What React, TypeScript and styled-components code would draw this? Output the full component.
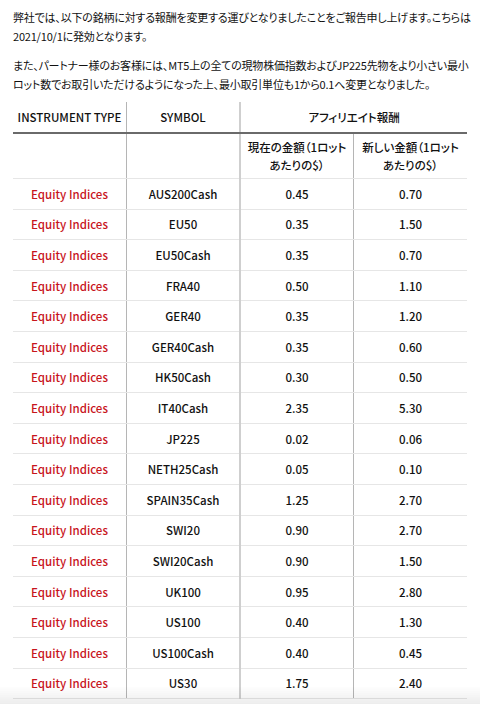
import React from "react";
import styled, { createGlobalStyle } from "styled-components";

const rows: [string, string, string][] = [
  ["AUS200Cash", "0.45", "0.70"],
  ["EU50", "0.35", "1.50"],
  ["EU50Cash", "0.35", "0.70"],
  ["FRA40", "0.50", "1.10"],
  ["GER40", "0.35", "1.20"],
  ["GER40Cash", "0.35", "0.60"],
  ["HK50Cash", "0.30", "0.50"],
  ["IT40Cash", "2.35", "5.30"],
  ["JP225", "0.02", "0.06"],
  ["NETH25Cash", "0.05", "0.10"],
  ["SPAIN35Cash", "1.25", "2.70"],
  ["SWI20", "0.90", "2.70"],
  ["SWI20Cash", "0.90", "1.50"],
  ["UK100", "0.95", "2.80"],
  ["US100", "0.40", "1.30"],
  ["US100Cash", "0.40", "0.45"],
  ["US30", "1.75", "2.40"],
];

const GlobalStyle = createGlobalStyle`
  body {
    margin: 0;
    background: #fff;
    color: #111;
    font-family: "Noto Sans CJK JP", "Noto Sans", sans-serif;
    font-feature-settings: "palt";
  }
`;

const Page = styled.div`
  padding: 8px 13px 0;
`;

const Para = styled.p`
  margin: 0 0 11px;
  font-size: 11px;
  line-height: 18.5px;
  letter-spacing: -0.2px;
  white-space: nowrap;
`;

const Table = styled.table`
  width: 100%;
  margin-top: -2px;
  border-collapse: collapse;
  table-layout: fixed;
  font-size: 11.5px;
`;

const line = (p: { $sep?: boolean; $wide?: boolean }) =>
  p.$sep ? (p.$wide ? "2px solid #cfcfcf" : "1px solid #b5b5b5") : "none";

const HeadCell = styled.th<{ $sep?: boolean; $wide?: boolean }>`
  height: 30px;
  padding: 0;
  font-weight: 500;
  text-align: center;
  border-bottom: 2px solid #6a6a6a;
  border-right: ${line};
`;

const SubCell = styled.th<{ $sep?: boolean; $wide?: boolean }>`
  height: 44px;
  padding: 0 4px;
  font-weight: 500;
  line-height: 18px;
  text-align: center;
  white-space: nowrap;
  border-bottom: 1px solid #e6e6e6;
  border-right: ${line};
`;

const Cell = styled.td<{ $red?: boolean; $sep?: boolean; $wide?: boolean }>`
  height: 29.6px;
  padding: 0;
  text-align: center;
  font-weight: 500;
  color: ${(p) => (p.$red ? "#c8141c" : "#111")};
  border-bottom: 1px solid #e6e6e6;
  border-right: ${line};
`;

const Fade = styled.div`
  position: fixed;
  left: 0;
  right: 0;
  bottom: 0;
  height: 18px;
  background: linear-gradient(rgba(0, 0, 0, 0), rgba(0, 0, 0, 0.07));
  pointer-events: none;
`;

const App = () => {
  return (
    <Page>
      <GlobalStyle />
      <Para>
        弊社では、以下の銘柄に対する報酬を変更する運びとなりましたことをご報告申し上げます。こちらは
        <br />
        2021/10/1に発効となります。
      </Para>
      <Para>
        また、パートナー様のお客様には、MT5上の全ての現物株価指数およびJP225先物をより小さい最小
        <br />
        ロット数でお取引いただけるようになった上、最小取引単位も1から0.1へ変更となりました。
      </Para>
      <Table>
        <thead>
          <tr>
            <HeadCell $sep>INSTRUMENT TYPE</HeadCell>
            <HeadCell $sep $wide>SYMBOL</HeadCell>
            <HeadCell colSpan={2}>アフィリエイト報酬</HeadCell>
          </tr>
          <tr>
            <SubCell $sep />
            <SubCell $sep $wide />
            <SubCell $sep>
              現在の金額（1ロット
              <br />
              あたりの$）
            </SubCell>
            <SubCell>
              新しい金額（1ロット
              <br />
              あたりの$）
            </SubCell>
          </tr>
        </thead>
        <tbody>
          {rows.map(([sym, cur, next]) => (
            <tr key={sym}>
              <Cell $red $sep>Equity Indices</Cell>
              <Cell $sep $wide>{sym}</Cell>
              <Cell $sep>{cur}</Cell>
              <Cell>{next}</Cell>
            </tr>
          ))}
        </tbody>
      </Table>
      <Fade />
    </Page>
  );
};

export default App;
